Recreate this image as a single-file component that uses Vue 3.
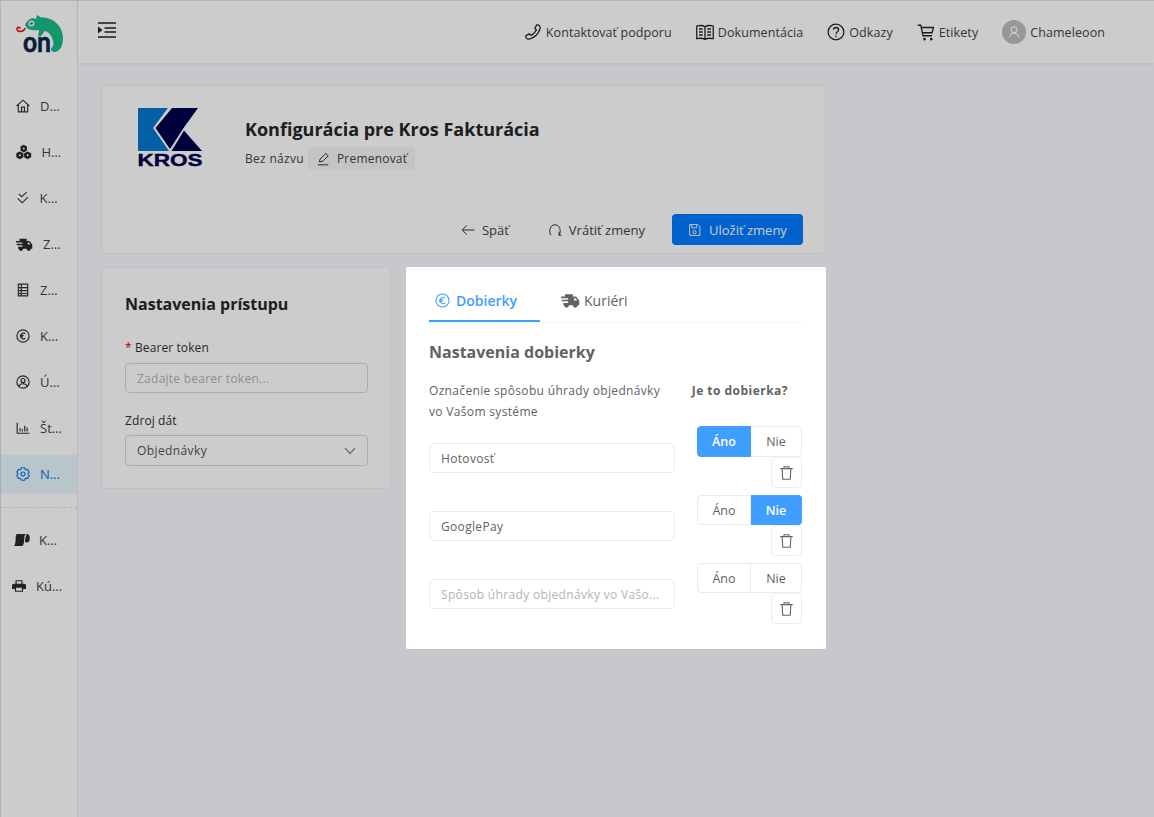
<template>
  <div class="app">
    <aside class="sidebar">
      <div class="logo">
        <svg width="78" height="60" viewBox="0 0 78 60">
          <path d="M25 25C27 20 32 17 36 19L37 15L41 17.500C54 17 63 27 63 38C63 46 60 51 55 52C52 52 50 50 51.500 48C53 47 54 44 53 41C52 36 49 32 45 31L41 36L38 36L39 30C33 31 27 30 25 25Z" fill="#1bbb89" />
          <circle cx="31.500" cy="23.500" r="3" fill="#e8f5ef" />
          <circle cx="31.500" cy="23.500" r="1.300" fill="#14805e" />
          <path d="M25 28C24 32 18 32.500 17 29.500C16.500 27.500 19 26.500 20.500 28.500" fill="none" stroke="#f00d1c" stroke-width="1.600" />
          <text x="23" y="51.500" class="logo-on" textLength="28" lengthAdjust="spacingAndGlyphs">on</text>
        </svg>
      </div>
      <nav class="nav">
        <a v-for="item in topNav" :key="item.icon" class="nav-item" :class="{ active: item.active }">
          <svg class="nav-ico" :style="{ width: item.w + 'px', height: item.w + 'px' }" viewBox="0 0 24 24" :class="icons[item.icon].solid ? 'solid' : 'line'">
            <path :d="icons[item.icon].d" />
          </svg>
          <span class="nav-label">{{ item.label }}</span>
        </a>
        <div class="nav-divider"></div>
        <a v-for="item in bottomNav" :key="item.icon" class="nav-item" :class="item.cls">
          <svg class="nav-ico" :style="{ width: item.w + 'px', height: item.w + 'px' }" viewBox="0 0 24 24" :class="icons[item.icon].solid ? 'solid' : 'line'">
            <path :d="icons[item.icon].d" />
          </svg>
          <span class="nav-label">{{ item.label }}</span>
        </a>
      </nav>
    </aside>

    <div class="page">
      <header class="topbar">
        <svg class="burger" width="18" height="16" viewBox="0 0 18 16">
          <path d="M0 1H18M6.500 6H18M6.500 10H18M0 15H18" stroke="#222" stroke-width="1.500" fill="none" />
          <path d="M0 4.500L4.500 8L0 11.500Z" fill="#222" />
        </svg>
        <div class="top-links">
          <a v-for="link in links" :key="link.label" class="top-link">
            <svg width="18" height="18" viewBox="0 0 24 24" class="line strong"><path :d="icons[link.icon].d" /></svg>
            <span>{{ link.label }}</span>
          </a>
          <a class="top-user">
            <span class="avatar">
              <svg width="14" height="14" viewBox="0 0 24 24"><path d="M12 3a5 5 0 1 0 0 10a5 5 0 0 0 0-10ZM4 21c1-5 4-7 8-7s7 2 8 7" fill="none" stroke="#fff" stroke-width="1.800" /></svg>
            </span>
            <span>Chameleoon</span>
          </a>
        </div>
      </header>

      <main class="content">
        <section class="card head-card">
          <div class="head-row">
            <svg class="kros" width="66" height="60" viewBox="137 108 66 60">
              <path d="M138 108H168L153 128L169 151H138Z" fill="#0478ce" />
              <path d="M172 108H198L183.500 128L170 149L155.500 128Z" fill="#00004d" />
              <path d="M184 130.500L202 151H171.500Z" fill="#00004d" />
              <text x="137.500" y="166" class="kros-text" textLength="65" lengthAdjust="spacingAndGlyphs">KROS</text>
            </svg>
            <div>
              <h1>Konfigurácia pre Kros Fakturácia</h1>
              <div class="name-row">
                <span>Bez názvu</span>
                <span class="rename">
                  <svg width="14" height="14" viewBox="0 0 24 24" class="line"><path d="M3 22H21M6 17L7 12L17 2.500L21 6.500L11.500 16Z" /></svg>
                  Premenovať
                </span>
              </div>
            </div>
          </div>
          <div class="head-actions">
            <a class="text-btn back">
              <svg width="14" height="14" viewBox="0 0 24 24" class="line"><path d="M23 12H2M10 4L2 12L10 20" /></svg>
              Späť
            </a>
            <a class="text-btn undo">
              <svg width="14" height="14" viewBox="0 0 24 24" class="line"><path d="M5 21C1 15 3 3 12 3S23 15 19 21M19 15V21H23" /></svg>
              Vrátiť zmeny
            </a>
            <button class="save">
              <svg width="13" height="14" viewBox="0 0 24 24" class="line light"><path d="M3 2H18L22 6V22H3ZM7 2V8H16V2M9 16a3 3 0 1 0 6 0a3 3 0 0 0-6 0" /></svg>
              Uložiť zmeny
            </button>
          </div>
        </section>

        <div class="columns">
          <section class="card access">
            <h2>Nastavenia prístupu</h2>
            <label class="field-label"><i>*</i> Bearer token</label>
            <input class="gray-input" placeholder="Zadajte bearer token..." />
            <label class="field-label second">Zdroj dát</label>
            <div class="select">
              <span>Objednávky</span>
              <svg width="12" height="8" viewBox="0 0 12 8"><path d="M1 1L6 6.500L11 1" fill="none" stroke="#8a8a8a" stroke-width="1.200" /></svg>
            </div>
          </section>

          <section class="card cod">
            <div class="tabs">
              <a class="tab tab-on">
                <svg width="15" height="15" viewBox="0 0 24 24" class="line blue"><circle cx="12" cy="12" r="10.500" /><path d="M16 8C12 5 8.500 8 8.500 12S12 19 16 16M6.500 11H13M6.500 13.500H12" /></svg>
                Dobierky
              </a>
              <a class="tab tab-off">
                <svg width="19" height="19" viewBox="0 0 24 24" class="solid gray"><path :d="icons.truck.d" /></svg>
                Kuriéri
              </a>
            </div>
            <h3>Nastavenia dobierky</h3>
            <div class="cod-head">
              <p>Označenie spôsobu úhrady objednávky vo Vašom systéme</p>
              <b>Je to dobierka?</b>
            </div>
            <div v-for="row in rows" :key="row.id" class="cod-row">
              <input class="white-input" :value="row.name" placeholder="Spôsob úhrady objednávky vo Vašo..." />
              <div class="row-actions">
                <div class="radio">
                  <span class="radio-btn" :class="{ on: row.cod === true }">Áno</span>
                  <span class="radio-btn" :class="{ on: row.cod === false }">Nie</span>
                </div>
                <button class="trash">
                  <svg width="15" height="16" viewBox="0 0 24 24" class="line"><path d="M2 5H22M8 5V2H16V5M5 5L6 22H18L19 5" /></svg>
                </button>
              </div>
            </div>
          </section>
        </div>
      </main>
    </div>
    <div class="mask"></div>
  </div>
</template>

<script setup>
// six toothed gear outline, same shape for every tooth
function gearPath() {
  const pt = (deg, r) => {
    const a = (deg * Math.PI) / 180
    return (12 + r * Math.cos(a)).toFixed(2) + ' ' + (12 + r * Math.sin(a)).toFixed(2)
  }
  let d = ''
  for (let i = 0; i < 6; i++) {
    const a = 60 * i - 90
    d += (i ? 'L' : 'M') + pt(a - 14, 11) + 'L' + pt(a + 14, 11) + 'L' + pt(a + 30, 8.6)
  }
  return d + 'ZM12 8.500a3.500 3.500 0 1 0 0 7a3.500 3.500 0 0 0 0-7Z'
}

const icons = {
  home: { d: 'M1 12L12 2L23 12M4 10V22H20V10M9.500 22V14H14.500V22' },
  cubes: { solid: true, d: 'M12 1L17 4V10L12 13L7 10V4ZM12 5.500a1.500 1.500 0 1 0 0 3a1.500 1.500 0 0 0 0-3ZM6 11.500L11.500 14.500V20.500L6 23.500L.5 20.500V14.500ZM6 16a1.500 1.500 0 1 0 0 3a1.500 1.500 0 0 0 0-3ZM18 11.500L23.500 14.500V20.500L18 23.500L12.500 20.500V14.500ZM18 16a1.500 1.500 0 1 0 0 3a1.500 1.500 0 0 0 0-3Z' },
  checks: { d: 'M5 5L10 10L19 2M3 13L11 21L21 11' },
  truck: { solid: true, d: 'M5 4H15V7H19L23 12V18H21a3 3 0 0 1-6 0H10a3 3 0 0 1-6 0H3V15H9V13H1V11H9V9H0V7H5ZM16.500 9V12H20.500L18.500 9Z' },
  table: { d: 'M4 2H20V22H4ZM4 8H20M4 13H20M4 18H20M9 2V22' },
  euro: { d: 'M12 1.500a10.500 10.500 0 1 0 0 21a10.500 10.500 0 0 0 0-21ZM16 8C12 5 8.500 8 8.500 12S12 19 16 16M6.500 11H13M6.500 13.500H12' },
  user: { d: 'M12 1.500a10.500 10.500 0 1 0 0 21a10.500 10.500 0 0 0 0-21ZM12 6a3.500 3.500 0 1 0 0 7a3.500 3.500 0 0 0 0-7ZM5 19.500C6 16 9 15 12 15S18 16 19 19.500' },
  chart: { d: 'M2 3V21H23M7 18V12M11 18V14M15 18V8M19 18V11' },
  gear: { d: gearPath() },
  roll: { solid: true, d: 'M6 3H21C18 3 17 6 17 9C17 13 16 21 14 21H1C3 21 4 14 4 9C4 6 5 3 6 3ZM21 3a3 4.500 0 1 1 0 12.500a3 6 0 0 1-3-1C18.500 11 18.500 6 21 3Z' },
  printer: { solid: true, d: 'M6 2H18V8H21a3 3 0 0 1 3 3V17H19V22H5V17H0V11a3 3 0 0 1 3-3H6ZM8 4V8H16V4ZM7 15V20H17V15Z' },
  phone: { d: 'M17 2.500C20 2 22 4 21.500 7C20 14 14 20 7 21.500C4 22 2 20 2.500 17L7 14.500L9.500 16.500C12 15 15 12 16.500 9.500L14.500 7Z' },
  book: { d: 'M12 5C9 3 5 3 1 4V21C5 20 9 20 12 22C15 20 19 20 23 21V4C19 3 15 3 12 5ZM12 5V22M4 8H9M4 12H9M4 16H9M15 8H20M15 12H20M15 16H20' },
  help: { d: 'M12 1.500a10.500 10.500 0 1 0 0 21a10.500 10.500 0 0 0 0-21ZM8.500 9C8.500 5 15.500 5 15.500 9C15.500 12 12 11.500 12 15M12 17V19' },
  cart: { d: 'M1 3H5L8 17H20M6 6H22L20 13H7.500M9 21.500a1 1 0 1 0 0-.1M18 21.500a1 1 0 1 0 0-.1' }
}

const topNav = [
  { label: 'D…', icon: 'home', w: 14 },
  { label: 'H…', icon: 'cubes', w: 15.500 },
  { label: 'K…', icon: 'checks', w: 13.500 },
  { label: 'Z…', icon: 'truck', w: 17 },
  { label: 'Z…', icon: 'table', w: 14 },
  { label: 'K…', icon: 'euro', w: 14 },
  { label: 'Ú…', icon: 'user', w: 14 },
  { label: 'Št…', icon: 'chart', w: 14 },
  { label: 'N…', icon: 'gear', w: 14, active: true }
]
const bottomNav = [
  { label: 'K…', icon: 'roll', w: 16, cls: 'pad-roll' },
  { label: 'Kú…', icon: 'printer', w: 14, cls: 'pad-print' }
]

const links = [
  { label: 'Kontaktovať podporu', icon: 'phone' },
  { label: 'Dokumentácia', icon: 'book' },
  { label: 'Odkazy', icon: 'help' },
  { label: 'Etikety', icon: 'cart' }
]

const rows = [
  { id: 1, name: 'Hotovosť', cod: true },
  { id: 2, name: 'GooglePay', cod: false },
  { id: 3, name: '', cod: null }
]
</script>

<style>
html, body { margin: 0; height: 100%; }
</style>

<style scoped>
.app {
  position: relative;
  display: flex;
  min-height: 817px;
  height: 817px;
  overflow: hidden;
  background: #fafbff;
  color: #333;
  font-family: "Open Sans", "Noto Sans", sans-serif;
  font-size: 13px;
}
.mask {
  position: absolute;
  inset: 0;
  background: rgba(0, 0, 0, 0.2);
  box-shadow: inset 1px 1px 0 rgba(0, 0, 20, 0.12);
  z-index: 5;
}

/* sidebar */
.sidebar {
  width: 77px;
  flex: none;
  background: #fff;
  border-right: 1px solid #ececec;
}
.logo { height: 60px; margin-bottom: 27px; }
.logo-on { font: 700 28px Lato, sans-serif; fill: #0a2647; stroke: #0a2647; stroke-width: 0.6px; }
.kros { overflow: visible; }
.kros-text { font: 700 16.500px "Liberation Sans", sans-serif; fill: #00004d; stroke: #00004d; stroke-width: 0.4px; }
.nav { display: flex; flex-direction: column; gap: 8px; }
.nav-item {
  display: flex;
  align-items: center;
  height: 38px;
  padding: 0 0 0 16px;
  color: #444;
}
.nav-item.active { background: #e6f8ff; color: #0b75e0; }
.nav-item.pad-roll { padding-left: 13px; }
.nav-item.pad-print { padding-left: 12px; }
.nav-ico { flex: none; margin-right: 10px; overflow: visible; }
.nav-label { white-space: nowrap; }
.nav-divider { border-top: 1px dashed #e4e4e4; margin: 6px 0 5px; }

.line path, .line circle { fill: none; stroke: #333; stroke-width: 1.700; }
.nav-ico.line path { stroke-width: 2; }
.solid path { fill: #2a2a2a; fill-rule: evenodd; }
.active .line path { stroke: #0b75e0; }
.line.light path { stroke: #fff; }
.line.blue path, .line.blue circle { stroke: #409eff; }
.solid.gray path { fill: #606266; }
.line.strong path { stroke: #222; }

/* top bar */
.page { flex: 1; min-width: 0; }
.topbar {
  height: 63px;
  box-sizing: border-box;
  display: flex;
  align-items: center;
  justify-content: space-between;
  padding: 0 49px 0 20px;
  background: #fff;
  box-shadow: 0 1px 4px rgba(0, 0, 0, 0.08);
}
.burger { margin-top: -4px; }
.top-links { display: flex; align-items: center; gap: 24px; margin-top: 1px; font-size: 12.500px; letter-spacing: 0.08px; }
.top-link, .top-user { display: flex; align-items: center; gap: 4px; color: #444; }

.avatar {
  width: 24px;
  height: 24px;
  border-radius: 50%;
  background: #bdbdbd;
  display: flex;
  align-items: center;
  justify-content: center;
}

/* content */
.content { padding: 22px 0 0 23px; width: 725px; }
.card {
  background: #fff;
  border: 1px solid #f2f2f2;
  border-radius: 4px;
  box-sizing: border-box;
}
.head-card { height: 169px; padding: 22px 22px 8px 35px; display: flex; flex-direction: column; justify-content: space-between; }
.head-row { display: flex; align-items: flex-start; gap: 42px; }
h1 { margin: 8px 0 5px; font-size: 18px; line-height: 26px; font-weight: 700; color: #262626; }
.name-row { display: flex; align-items: center; gap: 4px; font-size: 12px; color: #444; }
.name-row > span:first-child { letter-spacing: 0.3px; }
.rename {
  display: flex;
  align-items: center;
  gap: 7px;
  height: 23px;
  padding: 0 8px;
  border-radius: 4px;
  background: #f5f5f5;
  letter-spacing: 0.2px;
}
.head-actions { display: flex; align-items: center; justify-content: flex-end; }
.text-btn { display: flex; align-items: center; gap: 7px; color: #444; }
.back { margin-right: 39px; }
.undo { margin-right: 27px; }
.save {
  display: flex;
  align-items: center;
  gap: 8px;
  height: 31px;
  width: 131px;
  box-sizing: border-box;
  padding: 0 0 0 16px;
  border: 0;
  border-radius: 4px;
  background: #007bff;
  color: #fff;
  font: inherit;
  white-space: nowrap;
}

.columns { display: flex; gap: 15px; margin-top: 13px; align-items: flex-start; }
.access { width: 290px; height: 222px; padding: 24px 23px; }
h2 { margin: 0 0 23px; font-size: 16px; line-height: 24px; font-weight: 700; color: #262626; }
.field-label { display: block; font-size: 12px; line-height: 18px; margin-bottom: 6px; color: #333; letter-spacing: 0.1px; }
.field-label i { color: #e00000; font-style: normal; }
.field-label.second { margin-top: 19px; margin-bottom: 5px; }
.gray-input, .select {
  width: 243px;
  height: 30px;
  box-sizing: border-box;
  border: 1px solid #d9d9d9;
  border-radius: 4px;
  padding: 0 11px;
  font: inherit;
  font-size: 12px;
  color: #555;
  background: #fff;
  outline: none;
}
.gray-input::placeholder { letter-spacing: 0.25px; color: #b4b4b4; }
.white-input::placeholder { color: #b4b4b4; }
.select { height: 31px; display: flex; align-items: center; justify-content: space-between; letter-spacing: 0.4px; }

.cod {
  position: relative;
  z-index: 6;
  width: 420px;
  height: 382px;
  padding: 12px 23px 0;
  border: 0;
  border-radius: 2px;
}
.tabs { display: flex; border-bottom: 1px solid #f5f5f5; height: 44px; box-sizing: border-box; }
.tab { display: flex; align-items: center; gap: 6px; font-size: 14px; height: 43px; color: #606266; }
.tab-on {
  width: 111px;
  box-sizing: border-box;
  padding-left: 6px;
  padding-top: 2px;
  color: #409eff;
  font-weight: 600;
  border-bottom: 2px solid #409eff;
  margin-right: 21px;
}
.tab-off { gap: 4px; }
h3 { margin: 17px 0 16px; font-size: 16px; line-height: 24px; font-weight: 700; color: #606266; }
.cod-head { display: flex; justify-content: space-between; align-items: flex-start; width: 359px; }
.cod-head p { margin: 0; width: 240px; font-size: 12px; line-height: 21px; color: #606266; letter-spacing: 0.33px; }
.cod-head b { font-size: 12px; line-height: 21px; font-weight: 700; color: #606266; letter-spacing: 0.47px; }
.cod-row {
  display: flex;
  align-items: center;
  justify-content: space-between;
  width: 373px;
  margin-top: 6px;
}
.cod-head + .cod-row { margin-top: 4px; }
.white-input {
  width: 246px;
  height: 30px;
  margin-top: 2px;
  box-sizing: border-box;
  border: 1px solid #ececec;
  border-radius: 4px;
  padding: 0 11px;
  font: inherit;
  font-size: 12px;
  letter-spacing: 0.33px;
  color: #606266;
  outline: none;
}
.row-actions { display: flex; flex-direction: column; align-items: flex-end; width: 105px; }
.radio { display: flex; width: 105px; height: 31px; }
.cod-row + .cod-row .radio { height: 30px; margin-top: 1px; }
.radio-btn {
  display: flex;
  align-items: center;
  justify-content: center;
  font-size: 12.500px;
  color: #606266;
  border: 1px solid #ececec;
  box-sizing: border-box;
}
.radio-btn:first-child { flex: 0 0 54px; border-radius: 4px 0 0 4px; }
.radio-btn:last-child { flex: 1; border-radius: 0 4px 4px 0; border-left: 0; }
.radio-btn.on { background: #409eff; border-color: #409eff; color: #fff; font-weight: 600; }
.trash {
  display: flex;
  align-items: center;
  justify-content: center;
  width: 31px;
  height: 31px;
  padding: 0;
  border: 1px solid #ececec;
  border-radius: 4px;
  background: #fff;
}
.trash .line path { stroke: #606266; }
</style>
